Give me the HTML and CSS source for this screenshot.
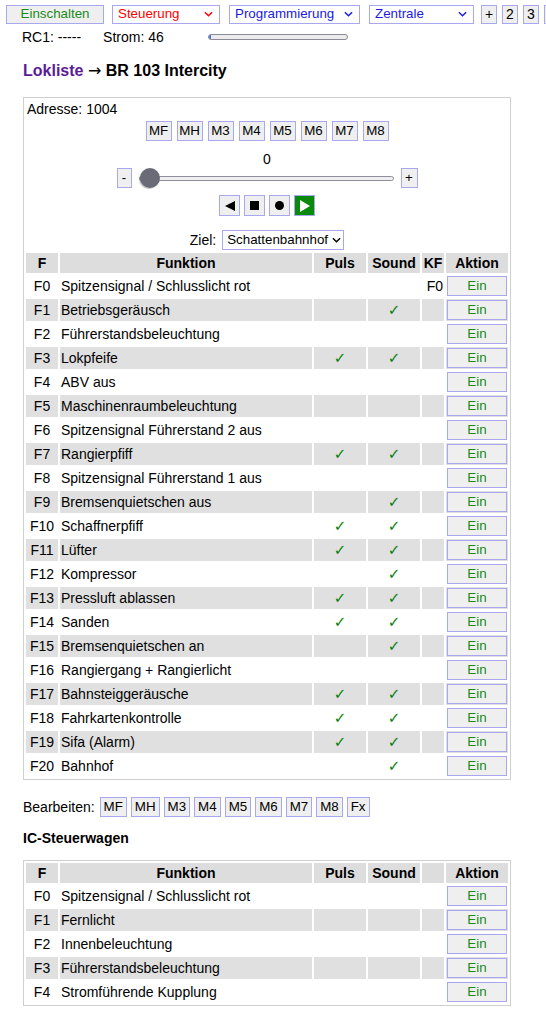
FILE: index.html
```html
<!DOCTYPE html>
<html lang="de">
<head>
<meta charset="utf-8">
<title>BR 103 Intercity</title>
<link rel="stylesheet" href="styles.css">
</head>
<body>
<div class="topbar">
  <button class="btn btn-on w-on">Einschalten</button>
  <div class="sel sel-red w-steu"><span>Steuerung</span><svg class="chev" viewBox="0 0 10 6"><path d="M1 1 L5 5 L9 1"/></svg></div>
  <div class="sel sel-blue w-prog"><span>Programmierung</span><svg class="chev" viewBox="0 0 10 6"><path d="M1 1 L5 5 L9 1"/></svg></div>
  <div class="sel sel-blue w-zent"><span>Zentrale</span><svg class="chev" viewBox="0 0 10 6"><path d="M1 1 L5 5 L9 1"/></svg></div>
  <div class="tabs">
    <button class="btn btn-sq">+</button>
    <button class="btn btn-sq">2</button>
    <button class="btn btn-sq">3</button>
    <button class="btn btn-sq" aria-label="4"></button>
  </div>
</div>

<div class="status">
  <span>RC1: -----</span>
  <span class="strom">Strom: 46</span>
  <div class="meter"><div class="meter-fill"></div></div>
</div>

<main class="main">
  <h1 class="title"><a class="crumb" href="#">Lokliste</a> <span class="arrow">→</span> BR 103 Intercity</h1>

  <section class="box">
    <div class="addr">Adresse: 1004</div>
    <div class="mrow">
      <button class="btn btn-m">MF</button>
      <button class="btn btn-m">MH</button>
      <button class="btn btn-m">M3</button>
      <button class="btn btn-m">M4</button>
      <button class="btn btn-m">M5</button>
      <button class="btn btn-m">M6</button>
      <button class="btn btn-m">M7</button>
      <button class="btn btn-m">M8</button>
    </div>
    <div class="speed">0</div>
    <div class="slider-row">
      <button class="btn btn-pm">-</button>
      <input class="range" type="range" min="0" max="126" value="0">
      <button class="btn btn-pm btn-plus">+</button>
    </div>
    <div class="dir-row">
      <button class="btn btn-dir"><svg viewBox="0 0 10 10" class="ico"><path d="M0 5 L10 0 L10 10 Z"/></svg></button>
      <button class="btn btn-dir"><svg viewBox="0 0 10 10" class="ico ico-sm"><rect x="0" y="0" width="10" height="10"/></svg></button>
      <button class="btn btn-dir"><svg viewBox="0 0 10 10" class="ico ico-sm"><circle cx="5" cy="5" r="5"/></svg></button>
      <button class="btn btn-dir btn-go"><svg viewBox="0 0 10 12" class="ico ico-play"><path d="M0 0 L10 6 L0 12 Z"/></svg></button>
    </div>
    <div class="ziel-row">
      <span>Ziel:</span>
      <div class="sel sel-black w-ziel"><span>Schattenbahnhof</span><svg class="chev" viewBox="0 0 10 6"><path d="M1 1 L5 5 L9 1"/></svg></div>
    </div>

    <table class="ftable">
      <thead>
        <tr><th class="c-f">F</th><th class="c-fn">Funktion</th><th class="c-p">Puls</th><th class="c-s">Sound</th><th class="c-kf">KF</th><th class="c-a">Aktion</th></tr>
      </thead>
      <tbody>
        <tr><td class="c-f">F0</td><td>Spitzensignal / Schlusslicht rot</td><td></td><td></td><td class="kf">F0</td><td><button class="btn btn-ein">Ein</button></td></tr>
        <tr><td class="c-f">F1</td><td>Betriebsgeräusch</td><td></td><td class="chk">✓</td><td></td><td><button class="btn btn-ein">Ein</button></td></tr>
        <tr><td class="c-f">F2</td><td>Führerstandsbeleuchtung</td><td></td><td></td><td></td><td><button class="btn btn-ein">Ein</button></td></tr>
        <tr><td class="c-f">F3</td><td>Lokpfeife</td><td class="chk">✓</td><td class="chk">✓</td><td></td><td><button class="btn btn-ein">Ein</button></td></tr>
        <tr><td class="c-f">F4</td><td>ABV aus</td><td></td><td></td><td></td><td><button class="btn btn-ein">Ein</button></td></tr>
        <tr><td class="c-f">F5</td><td>Maschinenraumbeleuchtung</td><td></td><td></td><td></td><td><button class="btn btn-ein">Ein</button></td></tr>
        <tr><td class="c-f">F6</td><td>Spitzensignal Führerstand 2 aus</td><td></td><td></td><td></td><td><button class="btn btn-ein">Ein</button></td></tr>
        <tr><td class="c-f">F7</td><td>Rangierpfiff</td><td class="chk">✓</td><td class="chk">✓</td><td></td><td><button class="btn btn-ein">Ein</button></td></tr>
        <tr><td class="c-f">F8</td><td>Spitzensignal Führerstand 1 aus</td><td></td><td></td><td></td><td><button class="btn btn-ein">Ein</button></td></tr>
        <tr><td class="c-f">F9</td><td>Bremsenquietschen aus</td><td></td><td class="chk">✓</td><td></td><td><button class="btn btn-ein">Ein</button></td></tr>
        <tr><td class="c-f">F10</td><td>Schaffnerpfiff</td><td class="chk">✓</td><td class="chk">✓</td><td></td><td><button class="btn btn-ein">Ein</button></td></tr>
        <tr><td class="c-f">F11</td><td>Lüfter</td><td class="chk">✓</td><td class="chk">✓</td><td></td><td><button class="btn btn-ein">Ein</button></td></tr>
        <tr><td class="c-f">F12</td><td>Kompressor</td><td></td><td class="chk">✓</td><td></td><td><button class="btn btn-ein">Ein</button></td></tr>
        <tr><td class="c-f">F13</td><td>Pressluft ablassen</td><td class="chk">✓</td><td class="chk">✓</td><td></td><td><button class="btn btn-ein">Ein</button></td></tr>
        <tr><td class="c-f">F14</td><td>Sanden</td><td class="chk">✓</td><td class="chk">✓</td><td></td><td><button class="btn btn-ein">Ein</button></td></tr>
        <tr><td class="c-f">F15</td><td>Bremsenquietschen an</td><td></td><td class="chk">✓</td><td></td><td><button class="btn btn-ein">Ein</button></td></tr>
        <tr><td class="c-f">F16</td><td>Rangiergang + Rangierlicht</td><td></td><td></td><td></td><td><button class="btn btn-ein">Ein</button></td></tr>
        <tr><td class="c-f">F17</td><td>Bahnsteiggeräusche</td><td class="chk">✓</td><td class="chk">✓</td><td></td><td><button class="btn btn-ein">Ein</button></td></tr>
        <tr><td class="c-f">F18</td><td>Fahrkartenkontrolle</td><td class="chk">✓</td><td class="chk">✓</td><td></td><td><button class="btn btn-ein">Ein</button></td></tr>
        <tr><td class="c-f">F19</td><td>Sifa (Alarm)</td><td class="chk">✓</td><td class="chk">✓</td><td></td><td><button class="btn btn-ein">Ein</button></td></tr>
        <tr><td class="c-f">F20</td><td>Bahnhof</td><td></td><td class="chk">✓</td><td></td><td><button class="btn btn-ein">Ein</button></td></tr>
      </tbody>
    </table>
  </section>

  <div class="edit-row">
    <span class="edit-label">Bearbeiten:</span>
    <button class="btn btn-e">MF</button>
    <button class="btn btn-e">MH</button>
    <button class="btn btn-e">M3</button>
    <button class="btn btn-e">M4</button>
    <button class="btn btn-e">M5</button>
    <button class="btn btn-e">M6</button>
    <button class="btn btn-e">M7</button>
    <button class="btn btn-e">M8</button>
    <button class="btn btn-e">Fx</button>
  </div>

  <h2 class="sub">IC-Steuerwagen</h2>

  <section class="box box2">
    <table class="ftable">
      <thead>
        <tr><th class="c-f">F</th><th class="c-fn">Funktion</th><th class="c-p">Puls</th><th class="c-s">Sound</th><th class="c-kf"></th><th class="c-a">Aktion</th></tr>
      </thead>
      <tbody>
        <tr><td class="c-f">F0</td><td>Spitzensignal / Schlusslicht rot</td><td></td><td></td><td></td><td><button class="btn btn-ein">Ein</button></td></tr>
        <tr><td class="c-f">F1</td><td>Fernlicht</td><td></td><td></td><td></td><td><button class="btn btn-ein">Ein</button></td></tr>
        <tr><td class="c-f">F2</td><td>Innenbeleuchtung</td><td></td><td></td><td></td><td><button class="btn btn-ein">Ein</button></td></tr>
        <tr><td class="c-f">F3</td><td>Führerstandsbeleuchtung</td><td></td><td></td><td></td><td><button class="btn btn-ein">Ein</button></td></tr>
        <tr><td class="c-f">F4</td><td>Stromführende Kupplung</td><td></td><td></td><td></td><td><button class="btn btn-ein">Ein</button></td></tr>
      </tbody>
    </table>
  </section>
</main>
</body>
</html>
```

FILE: styles.css
```css
* { box-sizing: border-box; }
html, body { margin: 0; }
body {
  font-family: "Liberation Sans", Arial, sans-serif;
  font-size: 14px;
  line-height: 16px;
  color: #000;
  background: #fff;
  padding: 4px 0 0 6px;
  overflow: hidden;
}

/* generic button */
.btn {
  font-family: "Liberation Sans", Arial, sans-serif;
  font-size: 13.33px;
  line-height: 16px;
  color: #000;
  background: #efefef;
  border: 1px solid #a8a8f0;
  border-radius: 0;
  padding: 0 3px;
  margin: 0;
  height: 20px;
  display: inline-flex;
  align-items: center;
  justify-content: center;
  flex: none;
}

/* top bar */
.topbar {
  display: flex;
  align-items: center;
  gap: 8px;
  white-space: nowrap;
  height: 20px;
  width: 600px;
}
.w-on { width: 98px; height: 19px; color: #1a8a1a; }
.sel {
  height: 19px;
  border: 1px solid #a8a8f0;
  background: #fff;
  display: flex;
  align-items: center;
  justify-content: space-between;
  padding: 0 6px 0 5px;
  font-size: 13.33px;
  flex: none;
  white-space: nowrap;
}
.chev { width: 9px; height: 6px; fill: none; stroke: currentColor; stroke-width: 1.6; flex: none; }
.sel-red { color: #ff0000; }
.sel-blue { color: #1a1ae6; }
.sel-black { color: #000; }
.w-steu { width: 108px; }
.w-prog { width: 131px; margin-left: 1px; }
.w-zent { width: 105px; margin-left: 1px; }
.tabs { display: flex; gap: 5px; margin-left: -1px; flex: none; }
.btn-sq { width: 16px; height: 19px; padding: 0; font-size: 14px; }

/* status line */
.status {
  display: flex;
  align-items: center;
  margin-top: 5px;
  padding-left: 16px;
  height: 16px;
}
.strom { margin-left: 22px; }
.meter {
  margin-left: 44px;
  width: 140px;
  height: 6px;
  border: 1px solid #8a8a96;
  border-radius: 3px;
  background: #ececee;
  overflow: hidden;
}
.meter-fill { width: 2px; height: 100%; background: #3b6fd8; }

/* main */
.main { padding-left: 17px; }
.title {
  margin: 17px 0 0 0;
  font-size: 16px;
  line-height: 18px;
  font-weight: bold;
}
.crumb { color: #5b1d96; text-decoration: none; }
.arrow { font-family: "DejaVu Sans", sans-serif; font-weight: normal; font-size: 16px; }

.box {
  margin-top: 17px;
  width: 488px;
  border: 1px solid #cfcfcf;
}
.addr { padding: 3px 0 0 3px; line-height: 16px; }
.mrow {
  display: flex;
  justify-content: center;
  gap: 5px;
  margin-top: 4px;
}
.btn-m { width: 26px; padding: 0; }
.speed { text-align: center; margin-top: 10px; line-height: 16px; }
.slider-row {
  display: flex;
  justify-content: center;
  align-items: center;
  gap: 7px;
  margin-top: 1px;
  height: 20px;
}
.btn-pm { width: 15px; height: 20px; padding: 0; }
.btn-plus { width: 17px; }
.range {
  -webkit-appearance: none;
  appearance: none;
  width: 255px;
  height: 20px;
  margin: 0;
  background: transparent;
}
.range::-webkit-slider-runnable-track {
  height: 5px;
  background: #efeff1;
  border: 1px solid #8f8f9d;
  border-radius: 3px;
}
.range::-webkit-slider-thumb {
  -webkit-appearance: none;
  width: 20px;
  height: 20px;
  border-radius: 50%;
  background: #6b6b78;
  margin-top: -8.5px;
  box-shadow: -1px 1px 1px rgba(0,0,0,0.25);
}
.dir-row {
  display: flex;
  justify-content: center;
  gap: 4px;
  margin-top: 7px;
}
.btn-dir { width: 21px; height: 21px; padding: 0; }
.ico { width: 10px; height: 10px; fill: #000; }
.ico-sm { width: 9px; height: 9px; }
.btn-go { background: #0a8a0a; }
.ico-play { width: 10px; height: 12px; fill: #fff; }
.ziel-row {
  display: flex;
  justify-content: center;
  align-items: center;
  gap: 6px;
  margin-top: 14px;
}
.w-ziel { width: 122px; height: 20px; padding: 0 5px 0 4px; gap: 4px; }

/* function tables */
.ftable {
  width: 100%;
  border-spacing: 2px;
  table-layout: fixed;
  margin-top: 1px;
}
.ftable th, .ftable td { padding: 1px; }
.ftable th {
  background: #dddddd;
  font-weight: bold;
  height: 20px;
  text-align: center;
}
.ftable td { height: 22px; }
.ftable tbody tr:nth-child(even) td { background: #e0e0e0; }
.c-f { width: 32px; text-align: center; }
.c-p, .c-s { width: 52px; }
.c-kf { width: 22px; }
.c-a { width: 62px; }
.kf { text-align: right; }
.chk {
  text-align: center;
  color: #0a800a;
  font-family: "DejaVu Sans", sans-serif;
  font-size: 15px;
  font-weight: bold;
}
.btn-ein { width: 60px; color: #1a8a1a; }

/* edit row */
.edit-row {
  display: flex;
  align-items: center;
  gap: 4px;
  margin-top: 17px;
}
.edit-label { margin-right: 1px; }
.btn-e { height: 20px; padding: 0 3px; min-width: 22px; }

.sub {
  margin: 13px 0 0 0;
  font-size: 14px;
  line-height: 16px;
  font-weight: bold;
}
.box2 { margin-top: 14px; }
.box2 .ftable { margin-top: 0; }
```
